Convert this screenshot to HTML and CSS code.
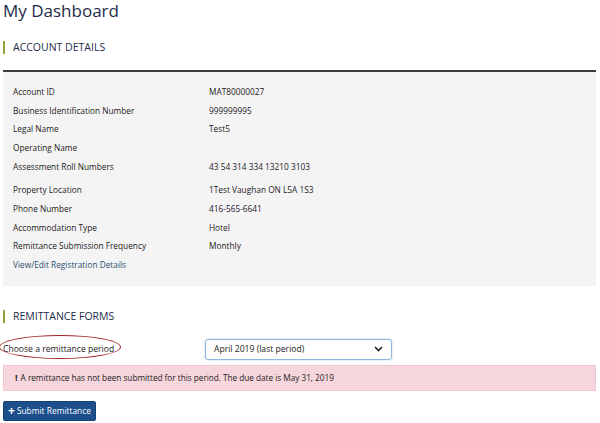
FILE: index.html
```html
<html>
<head>
<link rel="stylesheet" href="styles.css">
</head>
<body>
<div class="page">
  <h1 class="title">My Dashboard</h1>

  <h2 class="section-head">ACCOUNT DETAILS</h2>
  <div class="details">
    <div class="row"><span class="label">Account ID</span><span class="value">MAT80000027</span></div>
    <div class="row"><span class="label">Business Identification Number</span><span class="value">999999995</span></div>
    <div class="row"><span class="label">Legal Name</span><span class="value">Test5</span></div>
    <div class="row"><span class="label">Operating Name</span><span class="value"></span></div>
    <div class="row"><span class="label">Assessment Roll Numbers</span><span class="value">43 54 314 334 13210 3103</span></div>
    <div class="row gap"><span class="label">Property Location</span><span class="value">1Test Vaughan ON L5A 1S3</span></div>
    <div class="row"><span class="label">Phone Number</span><span class="value">416-565-6641</span></div>
    <div class="row"><span class="label">Accommodation Type</span><span class="value">Hotel</span></div>
    <div class="row"><span class="label">Remittance Submission Frequency</span><span class="value">Monthly</span></div>
    <div class="row"><a class="edit-link" href="#">View/Edit Registration Details</a></div>
  </div>

  <h2 class="section-head forms-head">REMITTANCE FORMS</h2>
  <div class="period">
    <label class="period-label" for="period">Choose a remittance period</label>
    <div class="select">
      <span>April 2019 (last period)</span>
      <svg width="9" height="6" viewBox="0 0 9 6"><path d="M1 1 L4.5 4.5 L8 1" fill="none" stroke="#222" stroke-width="1.6"/></svg>
    </div>
  </div>
  <div class="alert"><b>!</b> A remittance has not been submitted for this period. The due date is May 31, 2019</div>
  <button class="submit"><span class="plus">+</span>Submit Remittance</button>
</div>
</body>
</html>
```

FILE: styles.css
```css
body{
    margin: 0;
    font-family: "Open Sans", "Noto Sans", sans-serif;
    color: #222;
    background: #fff;
}
.page{
    padding: 0 4px 0 3px;
}
.title{
    margin: 0;
    font-size: 17px;
    font-weight: 400;
    color: #1c2b4a;
    line-height: 22px;
    padding-top: 0;
}
.section-head{
    margin: 19px 0 0 0;
    font-size: 10.5px;
    font-weight: 400;
    color: #1c2b4a;
    border-left: 2px solid #8da53c;
    padding-left: 8px;
    line-height: 13px;
}
.details{
    margin-top: 16px;
    border-top: 2px solid #3d3d3d;
    background: #f5f4f5;
    padding: 10px 10px 12px 10px;
    font-size: 8.3px;
}
.row{
    display: flex;
    height: 18.7px;
    align-items: center;
}
.row.gap{
    margin-top: 5px;
}
.label{
    width: 196px;
}
.edit-link{
    color: #2a4f6e;
    text-decoration: none;
}
.forms-head{
    margin-top: 24px;
}
.period{
    display: flex;
    align-items: center;
    margin-top: 16px;
    font-size: 8.6px;
}
.period-label{
    width: 202px;
    position: relative;
}
.period-label::after{
    content: "";
    position: absolute;
    left: -4px;
    top: -8px;
    width: 120px;
    height: 22px;
    border: 1.5px solid #a3232a;
    border-radius: 50%;
}
.select{
    width: 169px;
    height: 19px;
    border: 1px solid #8fb6dd;
    border-radius: 3px;
    box-shadow: 0 0 2px #aac8e8;
    display: flex;
    align-items: center;
    justify-content: space-between;
    padding: 0 8px 0 8px;
}
.alert{
    margin-top: 5px;
    background: #f7d5dc;
    border: 1px solid #f2c6cf;
    height: 24px;
    display: flex;
    align-items: center;
    padding-left: 11px;
    font-size: 8.2px;
    color: #222;
}
.alert b{
    margin-right: 3px;
    font-size: 9px;
}
.submit{
    margin-top: 10px;
    background: #1d4f8c;
    color: #fff;
    border: 1px solid #163f72;
    border-radius: 2px;
    font-family: "Open Sans", "Noto Sans", sans-serif;
    font-size: 8.4px;
    height: 20px;
    padding: 0 4px;
    display: flex;
    align-items: center;
}
.plus{
    font-weight: 700;
    font-size: 12px;
    margin-right: 2px;
}
```
